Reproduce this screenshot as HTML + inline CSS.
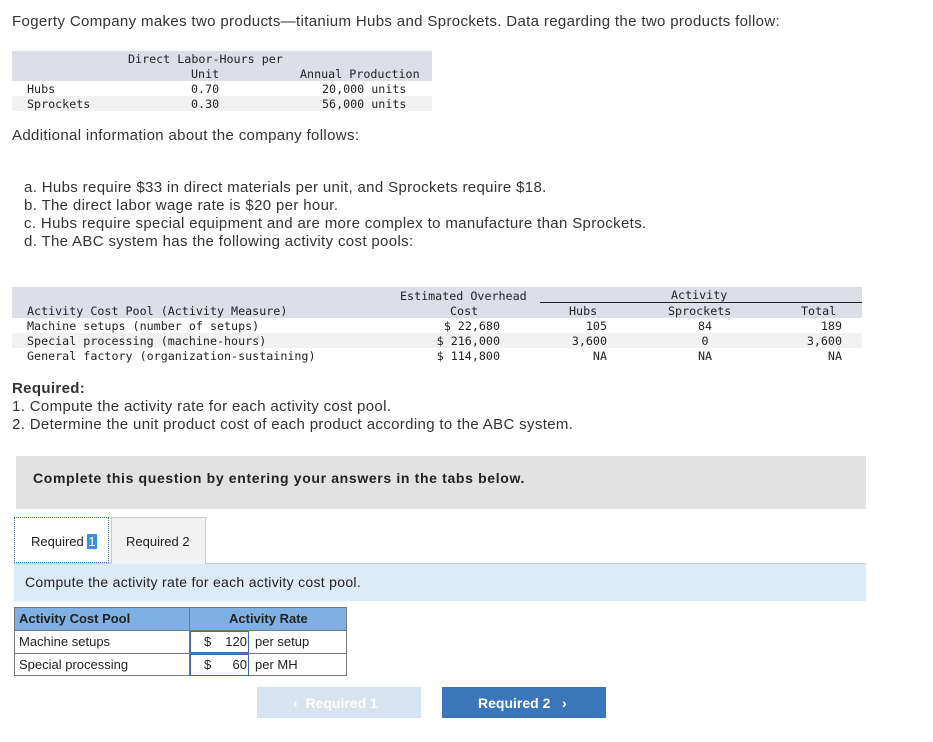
<!DOCTYPE html>
<html><head><style>
body{margin:0;width:933px;height:742px;background:#fff;position:relative;font-family:"Liberation Sans",sans-serif;color:#333;overflow:hidden}
.a{position:absolute;white-space:nowrap}
.t{font-size:15px;color:#333;letter-spacing:0.35px}
.m{font-family:"DejaVu Sans Mono","Liberation Mono",monospace;font-size:11.7px;color:#222}
.r{text-align:right}
.c{text-align:center}
</style></head><body>
<div class="a t" style="left:12px;top:13px">Fogerty Company makes two products—titanium Hubs and Sprockets. Data regarding the two products follow:</div>

<div class="a" style="left:12px;top:51px;width:420px;height:30px;background:#dcdee8"></div>
<div class="a" style="left:12px;top:96px;width:420px;height:15px;background:#f2f2f2"></div>
<div class="a m" style="left:128px;top:52px">Direct Labor-Hours per</div>
<div class="a m" style="left:191px;top:67px">Unit</div>
<div class="a m" style="left:300px;top:67px">Annual Production</div>
<div class="a m" style="left:27px;top:82px">Hubs</div>
<div class="a m" style="left:191px;top:82px">0.70</div>
<div class="a m" style="left:322px;top:82px">20,000 units</div>
<div class="a m" style="left:27px;top:97px">Sprockets</div>
<div class="a m" style="left:191px;top:97px">0.30</div>
<div class="a m" style="left:322px;top:97px">56,000 units</div>

<div class="a t" style="left:12px;top:127px">Additional information about the company follows:</div>
<div class="a t" style="left:24px;top:179px">a. Hubs require $33 in direct materials per unit, and Sprockets require $18.</div>
<div class="a t" style="left:24px;top:197px">b. The direct labor wage rate is $20 per hour.</div>
<div class="a t" style="left:24px;top:215px">c. Hubs require special equipment and are more complex to manufacture than Sprockets.</div>
<div class="a t" style="left:24px;top:233px">d. The ABC system has the following activity cost pools:</div>

<div class="a" style="left:12px;top:287px;width:850px;height:31px;background:#dcdee8"></div>
<div class="a" style="left:12px;top:333px;width:850px;height:15px;background:#f2f2f2"></div>
<div class="a" style="left:540px;top:302px;width:322px;height:1px;background:#222"></div>
<div class="a m" style="left:400px;top:289px">Estimated Overhead</div>
<div class="a m" style="left:450px;top:304px">Cost</div>
<div class="a m" style="left:671px;top:288px">Activity</div>
<div class="a m" style="left:27px;top:304px">Activity Cost Pool (Activity Measure)</div>
<div class="a m" style="left:569px;top:304px">Hubs</div>
<div class="a m" style="left:668px;top:304px">Sprockets</div>
<div class="a m" style="left:801px;top:304px">Total</div>
<div class="a m" style="left:27px;top:319px">Machine setups (number of setups)</div>
<div class="a m" style="left:27px;top:334px">Special processing (machine-hours)</div>
<div class="a m" style="left:27px;top:349px">General factory (organization-sustaining)</div>
<div class="a m r" style="left:400px;width:100px;top:319px">$ 22,680</div>
<div class="a m r" style="left:400px;width:100px;top:334px">$ 216,000</div>
<div class="a m r" style="left:400px;width:100px;top:349px">$ 114,800</div>
<div class="a m r" style="left:550px;width:57px;top:319px">105</div>
<div class="a m r" style="left:550px;width:57px;top:334px">3,600</div>
<div class="a m r" style="left:550px;width:57px;top:349px">NA</div>
<div class="a m c" style="left:670px;width:70px;top:319px">84</div>
<div class="a m c" style="left:670px;width:70px;top:334px">0</div>
<div class="a m c" style="left:670px;width:70px;top:349px">NA</div>
<div class="a m r" style="left:780px;width:62px;top:319px">189</div>
<div class="a m r" style="left:780px;width:62px;top:334px">3,600</div>
<div class="a m r" style="left:780px;width:62px;top:349px">NA</div>

<div class="a t" style="left:12px;top:380px;font-weight:bold">Required:</div>
<div class="a t" style="left:12px;top:398px">1. Compute the activity rate for each activity cost pool.</div>
<div class="a t" style="left:12px;top:416px">2. Determine the unit product cost of each product according to the ABC system.</div>

<div class="a" style="left:16px;top:456px;width:850px;height:53px;background:#e2e2e2"></div>
<div class="a" style="left:33px;top:470px;font-size:14px;font-weight:bold;color:#222;letter-spacing:0.65px">Complete this question by entering your answers in the tabs below.</div>

<div class="a" style="left:14px;top:563px;width:852px;height:1px;background:#ccc"></div>
<div class="a" style="left:111px;top:517px;width:93px;height:46px;background:#f2f2f2;border:1px solid #ccc;border-bottom:none"></div>
<div class="a" style="left:14px;top:517px;width:95px;height:46px;background:#fff;border:1px dotted #3c6db0;box-sizing:border-box"></div>
<div class="a" style="left:31px;top:534px;font-size:13px;color:#222">Required <span style="background:#3b8ee6;color:#fff;padding:0 1px">1</span></div>
<div class="a" style="left:126px;top:534px;font-size:13px;color:#222">Required 2</div>

<div class="a" style="left:14px;top:564px;width:852px;height:37px;background:#dcebf8"></div>
<div class="a" style="left:25px;top:574px;font-size:14px;color:#222;letter-spacing:0.3px">Compute the activity rate for each activity cost pool.</div>

<div class="a" style="left:14px;top:607px;width:333px;height:69px;border:1px solid #777;box-sizing:border-box"></div>
<div class="a" style="left:15px;top:608px;width:331px;height:22px;background:#7eb0e3"></div>
<div class="a" style="left:15px;top:630px;width:331px;height:1px;background:#777"></div>
<div class="a" style="left:15px;top:653px;width:331px;height:1px;background:#777"></div>
<div class="a" style="left:189px;top:608px;width:1px;height:68px;background:#777"></div>
<div class="a" style="left:190px;top:631px;width:59px;height:22px;border:1px solid #3b6aa8;box-sizing:border-box"></div>
<div class="a" style="left:190px;top:654px;width:59px;height:22px;border:1px solid #3b6aa8;box-sizing:border-box"></div>
<div class="a" style="left:19px;top:611px;font-size:13px;font-weight:bold;color:#222">Activity Cost Pool</div>
<div class="a" style="left:229px;top:611px;font-size:13px;font-weight:bold;color:#222">Activity Rate</div>
<div class="a" style="left:19px;top:634px;font-size:13px;color:#222">Machine setups</div>
<div class="a" style="left:19px;top:657px;font-size:13px;color:#222">Special processing</div>
<div class="a" style="left:204px;top:634px;font-size:13px;color:#222">$</div>
<div class="a" style="left:204px;top:657px;font-size:13px;color:#222">$</div>
<div class="a r" style="left:210px;width:37px;top:634px;font-size:13px;color:#222">120</div>
<div class="a r" style="left:210px;width:37px;top:657px;font-size:13px;color:#222">60</div>
<div class="a" style="left:255px;top:634px;font-size:13px;color:#222">per setup</div>
<div class="a" style="left:255px;top:657px;font-size:13px;color:#222">per MH</div>

<div class="a" style="left:257px;top:687px;width:164px;height:31px;background:#d6e3f1"></div>
<div class="a" style="left:293px;top:695px;font-size:14px;font-weight:bold;color:#fff">‹&nbsp;&nbsp;Required 1</div>
<div class="a" style="left:442px;top:687px;width:164px;height:31px;background:#3b76bb"></div>
<div class="a" style="left:478px;top:695px;font-size:14px;font-weight:bold;color:#fff">Required 2&nbsp;&nbsp; ›</div>
</body></html>
